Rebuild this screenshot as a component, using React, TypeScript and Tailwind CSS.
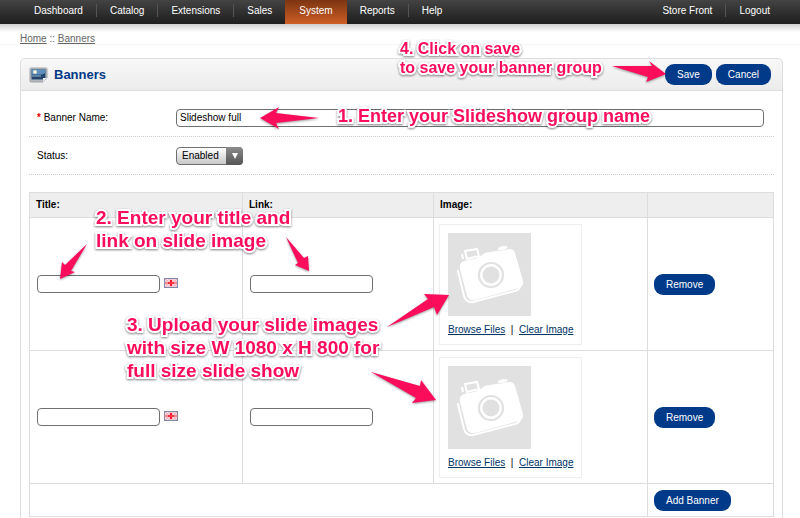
import type { ReactNode } from "react";

const leftLinks = ["Dashboard", "Catalog", "Extensions", "Sales", "System", "Reports", "Help"];
const rightLinks = ["Store Front", "Logout"];

function NavLink({ label, divider, active }: { label: string; divider: boolean; active: boolean }) {
  if (active) {
    return (
      <a
        href="#"
        aria-current="page"
        className="flex items-start bg-gradient-to-b from-[#7d3512] to-[#cf5f25] px-[14px] pt-1 text-white"
      >
        {label}
      </a>
    );
  }
  return (
    <>
      <a href="#" className="flex items-start px-[13px] pt-1 text-white">
        {label}
      </a>
      {divider && <span className="mt-1 h-[13px] w-px bg-[#555]" />}
    </>
  );
}

function PillButton({ children }: { children: ReactNode }) {
  return (
    <button type="button" className="h-[21px] rounded-[9px] bg-[#003a88] px-3 text-[10px] leading-[21px] text-white">
      {children}
    </button>
  );
}

function PictureIcon() {
  return (
    <svg width="19" height="16" viewBox="0 0 19 16" aria-hidden="true">
      <path d="M2 1h15q1 0 1 1v9l-4 4H2q-1 0-1-1V2q0-1 1-1z" fill="#b4b8bd" stroke="#a0a3a8" strokeWidth="1" />
      <rect x="2.5" y="2.5" width="14" height="10" fill="#24507f" />
      <rect x="2.5" y="2.5" width="14" height="5" fill="#5f8fba" />
      <circle cx="6" cy="5" r="2" fill="#eef4dc" />
      <path d="M3 8q4 2 7 1t6-3v6H3z" fill="#234468" />
      <path d="M3 9h9" stroke="#9bbad4" strokeWidth="1" />
      <path d="M14 15v-4h4z" fill="#ededed" />
    </svg>
  );
}

function Flag() {
  return (
    <svg width="14" height="10" viewBox="0 0 14 10" aria-label="English" role="img" className="mb-[3px]">
      <rect width="14" height="10" fill="#a9b2dc" />
      <path d="M1 1l12 8M13 1L1 9" stroke="#f8e4ea" strokeWidth="3" />
      <path d="M1 1l12 8M13 1L1 9" stroke="#f2a0ac" strokeWidth="1" />
      <path d="M7 1v8M1 5h12" stroke="#fbc4c8" strokeWidth="4" />
      <path d="M7 2v6M4 5h6" stroke="#f0192b" strokeWidth="2" />
      <path d="M1 5h12" stroke="#f4505e" strokeWidth="1" />
      <rect x=".5" y=".5" width="13" height="9" fill="none" stroke="#8189a8" />
    </svg>
  );
}

function CameraPlaceholder() {
  return (
    <svg width="83" height="83" viewBox="0 0 83 83" aria-label="No image" role="img" className="block">
      <rect width="83" height="83" fill="#e1e1e1" />
      <path
        d="M10 38l6 25q2 7 9 6l42-11q4-1 5-4"
        fill="none"
        stroke="#fff"
        strokeWidth="2"
        strokeLinecap="round"
      />
      <path
        d="M16 28l10-2q4-1 8-4 3-3 8-3l19-3q5 0 6 4l8 28q1 5-4 7l-44 12q-6 1-8-4L12 36q-1-6 4-8z"
        fill="#fff"
      />
      <path d="M17 18l12-2 2 7-12 3z" fill="none" stroke="#fff" strokeWidth="2" />
      <path d="M14 21l1 5" stroke="#fff" strokeWidth="2" />
      <path d="M49 17q1-3 5-4 5-1 6 1-2 4-11 3z" fill="#fff" stroke="#e1e1e1" strokeWidth=".5" />
      <circle cx="43" cy="42" r="12" fill="none" stroke="#e1e1e1" strokeWidth="2.2" />
      <circle cx="43" cy="42" r="8.5" fill="#e1e1e1" />
    </svg>
  );
}

function FormRow({ label, id, required, children }: { label: string; id: string; required?: boolean; children: ReactNode }) {
  return (
    <div className="flex h-[38px] items-center border-b border-dotted border-[#ccc] pr-[10px] pl-2">
      <label htmlFor={id} className="w-[139px] shrink-0">
        {required && <span className="font-bold text-[#e00]">* </span>}
        {label}
      </label>
      {children}
    </div>
  );
}

function BannerRow({ index }: { index: number }) {
  const box = "h-[18px] w-[123px] rounded-[4px] border border-[#707070] bg-white px-[3px] text-[10px]";
  const cell = "h-[133px] border border-[#ddd]";
  return (
    <tr>
      <td className={`${cell} pl-[7px]`}>
        <div className="flex items-center gap-1">
          <input type="text" aria-label={`Title ${index}`} className={box} />
          <Flag />
        </div>
      </td>
      <td className={`${cell} pl-[7px]`}>
        <input type="text" aria-label={`Link ${index}`} className={`${box} block`} />
      </td>
      <td className={`${cell} pl-[5px]`}>
        <div className="h-[121px] w-[143px] border border-[#eee] p-2">
          <CameraPlaceholder />
          <div className="mt-[7px] whitespace-pre leading-[14px]">
            <a href="#" className="text-[#003366] underline">Browse Files</a>
            {"  |  "}
            <a href="#" className="text-[#003366] underline">Clear Image</a>
          </div>
        </div>
      </td>
      <td className={`${cell} pl-[6px]`}>
        <PillButton>Remove</PillButton>
      </td>
    </tr>
  );
}

function Note({ place, children }: { place: string; children: ReactNode }) {
  return (
    <p
      className={`absolute font-bold whitespace-pre text-[#fb0d5c] [-webkit-text-stroke:4px_white] [paint-order:stroke_fill] [stroke-linejoin:round] [filter:drop-shadow(0_1px_1px_rgba(0,0,0,0.5))] ${place}`}
    >
      {children}
    </p>
  );
}

const arrows = [
  "260,118 279,107 276,113 319,118 276,123 279,129",
  "666,74 649,61 652,66 612,66 648,77 646,82",
  "60,279 62,262 65,265 87,244 71,271 75,272",
  "309,271 308,256 304,258 286,237 298,263 295,265",
  "449,295 424,294 428,299 387,327 434,307 437,315",
  "436,400 421,380 420,386 371,372 416,398 412,403",
];

function Annotations() {
  return (
    <div className="pointer-events-none absolute inset-0">
      <svg width="800" height="518" viewBox="0 0 800 518" aria-hidden="true" className="absolute top-0 left-0">
        {arrows.map((points) => (
          <polygon
            key={points}
            points={points}
            fill="#fb0d5c"
            className="[filter:drop-shadow(0_1px_1px_rgba(0,0,0,0.4))]"
          />
        ))}
      </svg>
      <Note place="left-[400px] top-[39px] text-[16px] leading-[19px]">{"4. Click on save\nto save your banner group"}</Note>
      <Note place="left-[338px] top-[105px] text-[18px] leading-[23px]">1. Enter your Slideshow group name</Note>
      <Note place="left-[96px] top-[206px] text-[19px] leading-[23px]">{"2. Enter your title and\nlink on slide image"}</Note>
      <Note place="left-[127px] top-[313px] text-[19px] leading-[23px]">
        {"3. Upload your slide images\nwith size W 1080 x H 800 for\nfull size slide show"}
      </Note>
    </div>
  );
}

export default function App() {
  const head = "h-[25px] border border-[#ddd] pl-[6px] text-left font-bold";
  return (
    <div className="relative flex min-h-screen flex-col bg-white font-['Liberation_Sans',Arial,sans-serif] text-[10px] leading-[14px] text-black">
      <nav className="flex h-6 justify-between bg-gradient-to-b from-[#444] to-[#1e1e1e] pr-[17px] pl-[21px]">
        <div className="flex">
          {leftLinks.map((label) => (
            <NavLink
              key={label}
              label={label}
              divider={label !== "Sales" && label !== "Help"}
              active={label === "System"}
            />
          ))}
        </div>
        <div className="flex">
          {rightLinks.map((label) => (
            <NavLink key={label} label={label} divider={label === "Store Front"} active={false} />
          ))}
        </div>
      </nav>
      <div className="h-[21px] border-b border-[#f6f6f6] bg-gradient-to-b from-[#cfcfcf] via-white via-40% to-white px-5 pt-2 text-[#666]">
        <a href="#" className="underline">Home</a> :: <a href="#" className="underline">Banners</a>
      </div>

      <main className="mt-[13px] mr-[17px] ml-5 flex grow flex-col">
        <header className="flex h-[33px] items-center justify-between rounded-t-[5px] border border-[#ddd] bg-gradient-to-b from-[#f8f8f8] to-[#ececec] pr-[11px] pl-2">
          <div className="flex items-center gap-[6px]">
            <PictureIcon />
            <h1 className="pt-px text-[13px] font-bold text-[#003a88]">Banners</h1>
          </div>
          <div className="flex gap-1">
            <PillButton>Save</PillButton>
            <PillButton>Cancel</PillButton>
          </div>
        </header>
        <form className="grow border-x border-[#ddd] px-2 pt-2">
          <FormRow label="Banner Name:" id="banner-name" required>
            <input
              id="banner-name"
              type="text"
              defaultValue="Slideshow full"
              className="h-[18px] min-w-0 grow rounded-[4px] border border-[#707070] bg-white px-[3px] text-[10px]"
            />
          </FormRow>
          <FormRow label="Status:" id="status">
            <div className="relative">
              <select
                id="status"
                className="block h-[18px] w-[67px] appearance-none rounded-[4px] border border-[#707070] bg-gradient-to-b from-white to-[#c8c8c8] pl-[5px] text-[10px]"
              >
                <option>Enabled</option>
                <option>Disabled</option>
              </select>
              <span className="pointer-events-none absolute inset-y-0 right-0 flex w-[17px] items-center justify-center rounded-r-[4px] bg-gradient-to-b from-[#8c8c8c] to-[#555]">
                <svg width="6" height="6" viewBox="0 0 6 6" aria-hidden="true">
                  <path d="M0 0h6L3 6z" fill="#fff" />
                </svg>
              </span>
            </div>
          </FormRow>

          <table className="mt-[17px] w-full table-fixed border-collapse">
            <colgroup>
              <col className="w-[213px]" />
              <col className="w-[191px]" />
              <col className="w-[214px]" />
              <col />
            </colgroup>
            <thead className="bg-[#eee]">
              <tr>
                <th className={head}>Title:</th>
                <th className={head}>Link:</th>
                <th className={head}>Image:</th>
                <th className={head} aria-label="Actions" />
              </tr>
            </thead>
            <tbody>
              <BannerRow index={1} />
              <BannerRow index={2} />
            </tbody>
            <tfoot>
              <tr>
                <td colSpan={3} className="h-[33px] border border-[#ddd]" />
                <td className="h-[33px] border border-[#ddd] pl-[6px]">
                  <PillButton>Add Banner</PillButton>
                </td>
              </tr>
            </tfoot>
          </table>
        </form>
      </main>
      <Annotations />
    </div>
  );
}
